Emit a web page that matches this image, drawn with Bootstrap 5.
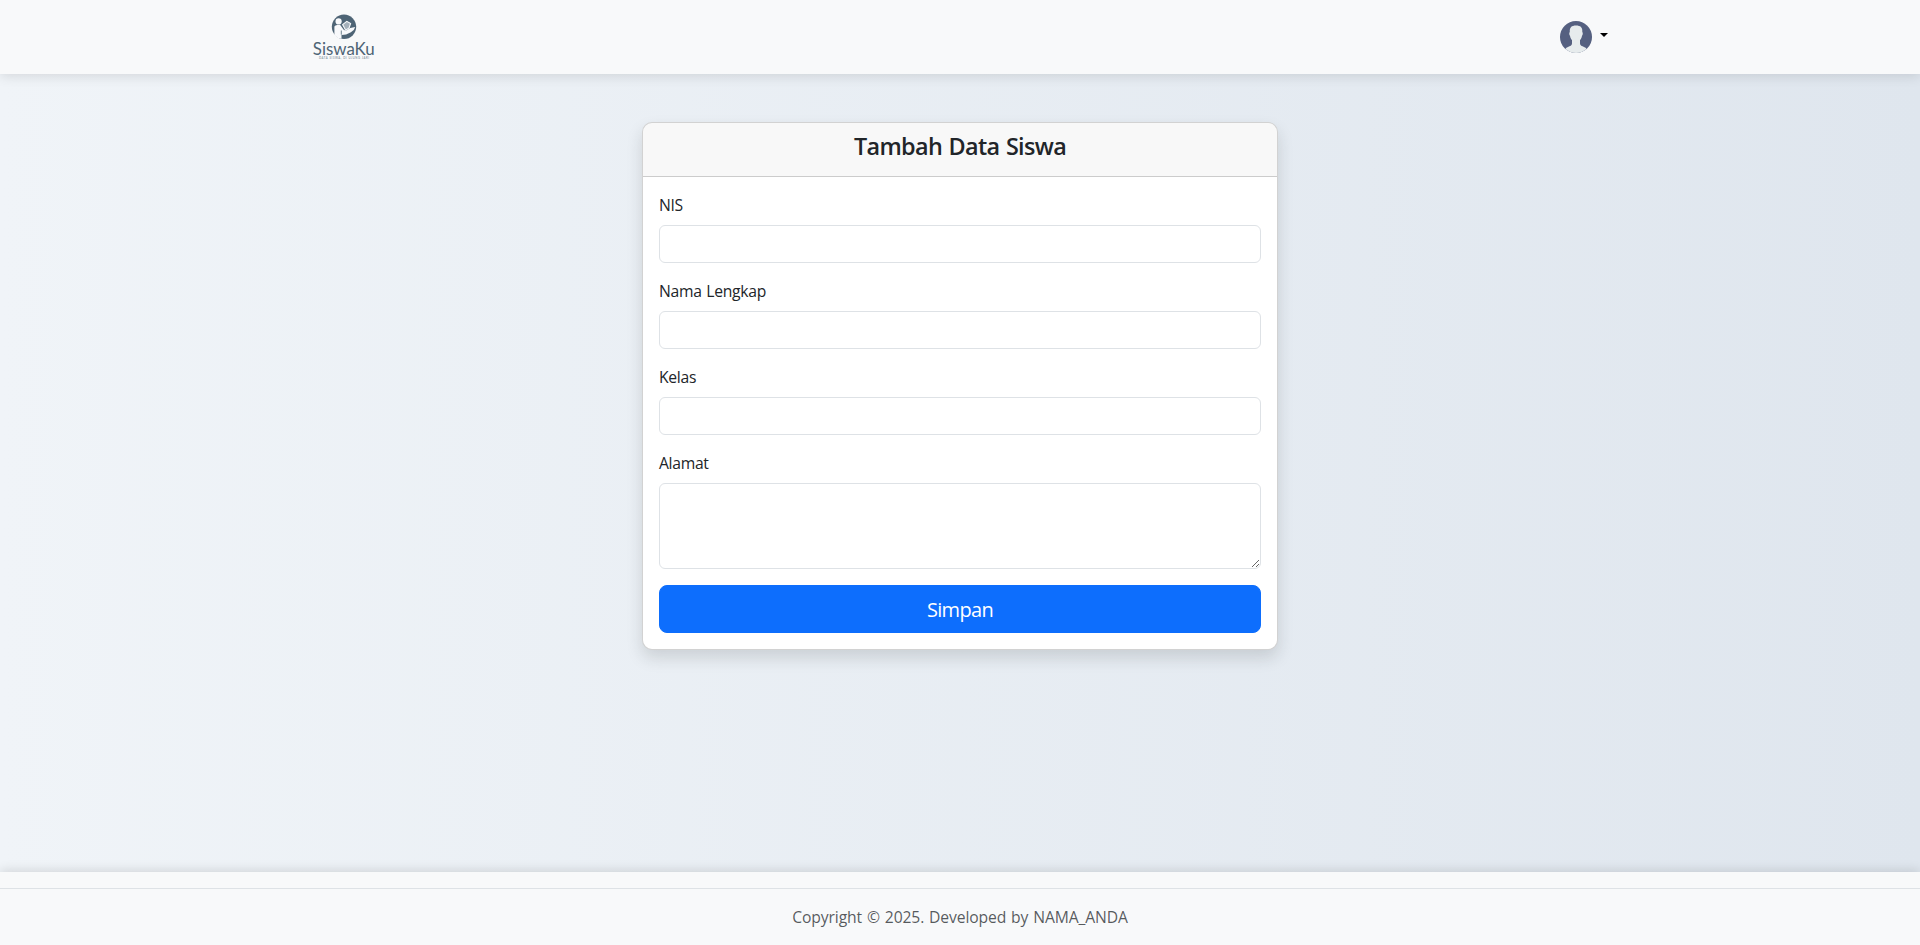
<!DOCTYPE html>
<html lang="id">
<head>
<meta charset="utf-8">
<meta name="viewport" content="width=device-width, initial-scale=1">
<title>SiswaKu - Tambah Data Siswa</title>
<link href="https://cdn.jsdelivr.net/npm/bootstrap@5.3.0/dist/css/bootstrap.min.css" rel="stylesheet">
<style>
body{font-family:"Open Sans","Noto Sans",sans-serif;background:linear-gradient(90deg,#f0f4f8,#dfe6ee)}
.top-bar{height:74px;box-shadow:0 2px 12px rgba(0,0,0,.12)}
.site-footer{box-shadow:0 -2px 10px rgba(0,0,0,.12)}
.form-card{border-radius:10px;--bs-card-inner-border-radius:9px}
.card-title-text{font-size:23.4px;line-height:28.8px;letter-spacing:-.65px;word-spacing:1px;padding-top:1px;margin-bottom:7px}
.form-label{font-size:15.7px;line-height:24px;letter-spacing:-.3px;word-spacing:1px}
.btn-save{letter-spacing:-.65px;padding:9px 16px 7px}
.copyright{font-size:15.7px;line-height:24px;letter-spacing:-.13px;word-spacing:1px}
.dropdown-toggle::after{margin-left:8px;margin-bottom:4px}
</style>
</head>
<body class="d-flex flex-column min-vh-100">
<nav class="navbar bg-body-tertiary top-bar p-0">
  <div class="container">
    <a class="navbar-brand p-0 m-0" href="#" aria-label="SiswaKu">
      <svg class="d-block" width="64" height="64" viewBox="0 0 64 64">
        <circle cx="32" cy="21.8" r="12.2" fill="#4e6475"/>
        <g fill="#f8f9fb">
          <circle cx="26.6" cy="16.4" r="3.1"/>
          <path d="M22.4 21.600q.8-1.700 2.800-1.700h3l3.500 4.800 2 1 4.500-2.600 5-1.100q-1 3.800-4.300 5.300l-4.800 2.200-4.600.4v3.900q-4.300-.6-7.100-3.600z"/>
        </g>
        <path d="M30.600 19.600l4.200-3.300 3.800 2.100-1.500 4.500-3.400 2.300z" fill="#a4b0ba" stroke="#f8f9fb" stroke-width="1.100"/>
        <path d="M29.300 25.500v4.200" stroke="#4e6475" stroke-width=".8"/>
        <text x=".8" y="50.200" textLength="62" lengthAdjust="spacingAndGlyphs" font-family="Lato,sans-serif" font-size="17" fill="#4e6475">SiswaKu</text>
        <text x="7" y="54.200" textLength="50" font-family="Lato,sans-serif" font-size="2.800" fill="#6d7e8c">DATA SISWA, DI UJUNG JARI</text>
      </svg>
    </a>
    <a class="dropdown-toggle text-black text-decoration-none d-flex align-items-center me-0" href="#" aria-label="Profil">
      <svg width="32" height="32" viewBox="0 0 32 32">
        <defs><clipPath id="avatar"><circle cx="16" cy="16" r="16"/></clipPath></defs>
        <g clip-path="url(#avatar)"><path fill="#556080" d="M0 0h32v32H0z"/>
        <path fill="#e7eced" d="M9.800 11C9.500 6.500 11.500 4.500 16 4.500s6.700 2 6.300 6.500c.8.500.6 3-.3 3.800-.3 2-1 3.300-2 4.400v3.300c0 2 2 2.600 4 3.500 2.500 1 3.500 2.500 3.500 6h-23c0-3.500 1-5 3.500-6 2-.9 4-1.500 4-3.500v-3.300c-1-1.100-1.700-2.400-2-4.400-.9-.8-1-3.300-.2-3.800z"/></g>
      </svg>
    </a>
  </div>
</nav>
<main class="container flex-grow-1">
  <div class="row justify-content-center mt-5">
    <div class="col-6">
      <div class="card shadow form-card">
        <div class="card-header text-center"><h4 class="card-title-text fw-semibold">Tambah Data Siswa</h4></div>
        <div class="card-body">
          <form>
            <div class="mb-3"><label class="form-label" for="nis">NIS</label><input class="form-control" id="nis"></div>
            <div class="mb-3"><label class="form-label" for="nama">Nama Lengkap</label><input class="form-control" id="nama"></div>
            <div class="mb-3"><label class="form-label" for="kelas">Kelas</label><input class="form-control" id="kelas"></div>
            <div class="mb-3"><label class="form-label" for="alamat">Alamat</label><textarea class="form-control" id="alamat" rows="3"></textarea></div>
            <button class="btn btn-primary btn-lg btn-save w-100 d-block" type="button">Simpan</button>
          </form>
        </div>
      </div>
    </div>
  </div>
</main>
<footer class="site-footer bg-body-tertiary pt-3">
  <div class="border-top p-3 text-center text-body-secondary copyright">Copyright © 2025. Developed by NAMA_ANDA</div>
</footer>
<script src="https://cdn.jsdelivr.net/npm/bootstrap@5.3.0/dist/js/bootstrap.bundle.min.js"></script>
</body>
</html>
